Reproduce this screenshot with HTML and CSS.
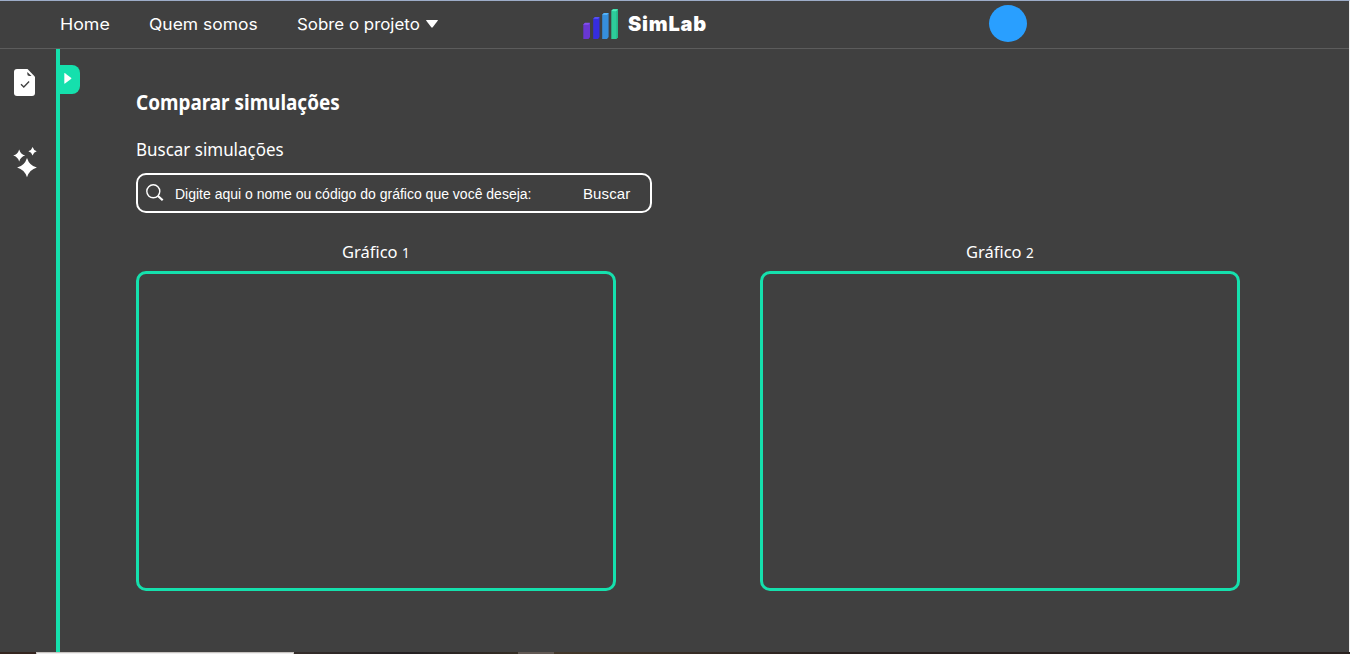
FILE: index.html
```html
<!DOCTYPE html>
<html lang="pt-BR">
<head>
<meta charset="utf-8">
<title>SimLab</title>
<link rel="stylesheet" href="styles.css">
</head>
<body>
<div class="app">
  <header class="header">
    <nav class="nav">
      <a class="home">Home</a>
      <a class="about">Quem somos</a>
      <a class="project">Sobre o projeto</a>
      <svg class="caret" width="12" height="8" viewBox="0 0 12 8"><path d="M.6 0h10.800q.9 0 .3.8L6.700 7.300q-.7.9-1.400 0L.3.8Q-.3 0 .6 0z" fill="#fff"/></svg>
    </nav>
    <div class="brand">
      <svg width="36" height="32" viewBox="0 0 36 32">
        <path d="M.3 15.500L2 14h5v14l-1.500 2H.3z" fill="#6937d2"/><path d="M.3 15.500L2 13.800h5l-1.500 2H.3z" fill="#8250ee"/>
        <path d="M10.200 9.500L12 8h4.500v20L15 30h-4.800z" fill="#352de0"/><path d="M10.200 9.700L12 8h4.500L15 9.900z" fill="#5650f2"/>
        <path d="M19.200 5.500L21 4h4.600v24L24 30h-4.800z" fill="#368fdc"/><path d="M19.200 5.800L21 4h4.600L24 6z" fill="#55b4fa"/>
        <path d="M28.300 1.800L30 .2h5v28L33.300 30h-5z" fill="#2dcc9a"/><path d="M28.300 2.100L30 .2h5L33.300 2.300z" fill="#4cf0bd"/><path d="M33.300 2.300L35 .2v28L33.300 30z" fill="#25b889"/>
      </svg>
      <span class="brand-name">SimLab</span>
    </div>
    <div class="avatar"></div>
  </header>
  <div class="body">
    <aside class="sidebar">
      <svg class="doc" width="21" height="27" viewBox="0 0 21 28" preserveAspectRatio="none"><path d="M3 0h10.500L21 8v17q0 3-3 3H3q-3 0-3-3V3q0-3 3-3z" fill="#fff"/><path d="M13.300 3v2.200q0 2 2 2h2.200z" fill="#404040"/><path d="M7 15.800l2.800 2.900 5.300-5.700" fill="none" stroke="#404040" stroke-width="1.300"/></svg>
      <svg class="stars" width="25" height="31" viewBox="0 0 25 31"><g fill="#fff"><path d="M6.200 2.500Q7.600 7.300 12.200 8.500Q7.600 9.800 6.200 14.500Q4.800 9.800.2 8.500Q4.800 7.300 6.200 2.500z"/><path d="M19.600 0Q20.600 3.300 23.700 4.300Q20.600 5.300 19.600 8.500Q18.600 5.300 15.400 4.300Q18.600 3.300 19.600 0z"/><path d="M14 11Q16.500 18.800 23.900 20.600Q16.500 22.700 14 30.200Q11.500 22.700 4.100 20.600Q11.500 18.800 14 11z"/></g></svg>
    </aside>
    <div class="toggle"><svg width="8" height="11" viewBox="0 0 8 11"><path d="M.3.500Q.3-.2 1 .3L7 4.800q.7.600 0 1.200L1 10.500q-.7.500-.7-.3z" fill="#fff"/></svg></div>
    <main class="main">
      <h1 class="title"><span>Comparar simulações</span></h1>
      <h2 class="subtitle"><span>Buscar simulações</span></h2>
      <div class="search">
        <svg width="18" height="18" viewBox="0 0 18 18"><circle cx="7.300" cy="7.300" r="6.500" fill="none" stroke="#fff" stroke-width="1.400"/><path d="M12 12l4.700 4.300" stroke="#fff" stroke-width="2.200"/></svg>
        <span class="hint">Digite aqui o nome ou código do gráfico que você deseja:</span>
        <span class="submit">Buscar</span>
      </div>
      <div class="charts">
        <section class="chart"><h3 class="chart-title"><span>Gráfico <small>1</small></span></h3><div class="plot"></div></section>
        <section class="chart"><h3 class="chart-title"><span>Gráfico <small>2</small></span></h3><div class="plot"></div></section>
      </div>
    </main>
  </div>
</div>
<footer class="taskbar"><div class="tb-start"></div><div class="tb-window"></div><div class="tb-mid"></div><div class="tb-item"></div><div class="tb-rest"></div></footer>
</body>
</html>
```
FILE: styles.css
```css
* { box-sizing: border-box; }
body { margin: 0; background: #404040; color: #fff; font-family: "Noto Sans", sans-serif; height: 654px; overflow: hidden; }
.app { height: 652px; border-top: 1px solid #9dacc8; border-right: 1px solid #eee; }
.header { height: 48px; border-bottom: 1px solid #5c5c5c; display: flex; }
.nav { display: flex; width: 583px; padding-left: 60px; font: 16px/46px Inter, sans-serif; white-space: nowrap; }
.nav a { transform-origin: left; }
.home { width: 89px; transform: scaleX(1.11); }
.about { width: 148px; transform: scaleX(1.09); }
.project { width: 129px; transform: scaleX(1.055); }
.caret { margin-top: 19px; }
.brand { display: flex; width: 405.500px; padding-top: 8px; }
.brand-name { margin-left: 9px; font: 900 20px/30px Inter, sans-serif; letter-spacing: .8px; }
.avatar { width: 38px; height: 37px; border-radius: 50%; background: #299fff; margin-top: 4px; }
.body { height: 603px; display: flex; }
.sidebar { width: 60px; border-right: 4px solid #15e0ad; padding: 20px 0 0 14px; display: flex; flex-direction: column; }
.stars { margin: 51px 0 0 -1px; }
.toggle { width: 20px; height: 29px; margin-top: 16px; background: #15e0ad; border-radius: 0 8px 8px 0; padding: 8px 0 0 4px; line-height: 0; }
.main { padding: 37px 0 0 56px; }
.title, .subtitle, .chart-title { margin: 0; white-space: nowrap; }
.title span, .subtitle span, .chart-title span { display: inline-block; }
.title { font-size: 22px; line-height: 30px; height: 49px; }
.title span { transform: scaleX(.86); transform-origin: left; }
.subtitle { font-size: 18px; line-height: 28px; height: 38px; font-weight: 400; }
.subtitle span { transform: scaleX(.943); transform-origin: left; }
.search { width: 516px; height: 40px; border: 2px solid #fff; border-radius: 10px; padding-left: 8px; display: flex; align-items: center; font-family: "Liberation Sans", sans-serif; white-space: nowrap; }
.hint { width: 409px; padding: 1px 0 0 11px; margin-right: 10px; font-size: 14px; }
.submit { font-size: 15px; letter-spacing: .1px; }
.charts { display: flex; gap: 144px; padding-top: 24px; }
.chart { width: 480px; }
.chart-title { font-size: 17px; line-height: 30px; height: 34px; font-weight: 400; text-align: center; }
.chart-title span { transform: scaleX(.97); }
.chart-title small { font-size: 14px; }
.plot { height: 320px; border: 3px solid #15e0ad; border-radius: 10px; }
.taskbar { height: 2px; display: flex; background: #29211f; }
.tb-start { width: 36px; background: #352620; }
.tb-window { width: 258px; background: #eee; border: 1px solid #c7c3c0; border-bottom: 0; }
.tb-mid { width: 224px; background: linear-gradient(90deg, #352d2a, #242022 50%, #352d24); }
.tb-item { width: 36px; background: #625954; }
.tb-rest { flex: 1; background: linear-gradient(90deg, #44382a, #29211f 35%); }
```
